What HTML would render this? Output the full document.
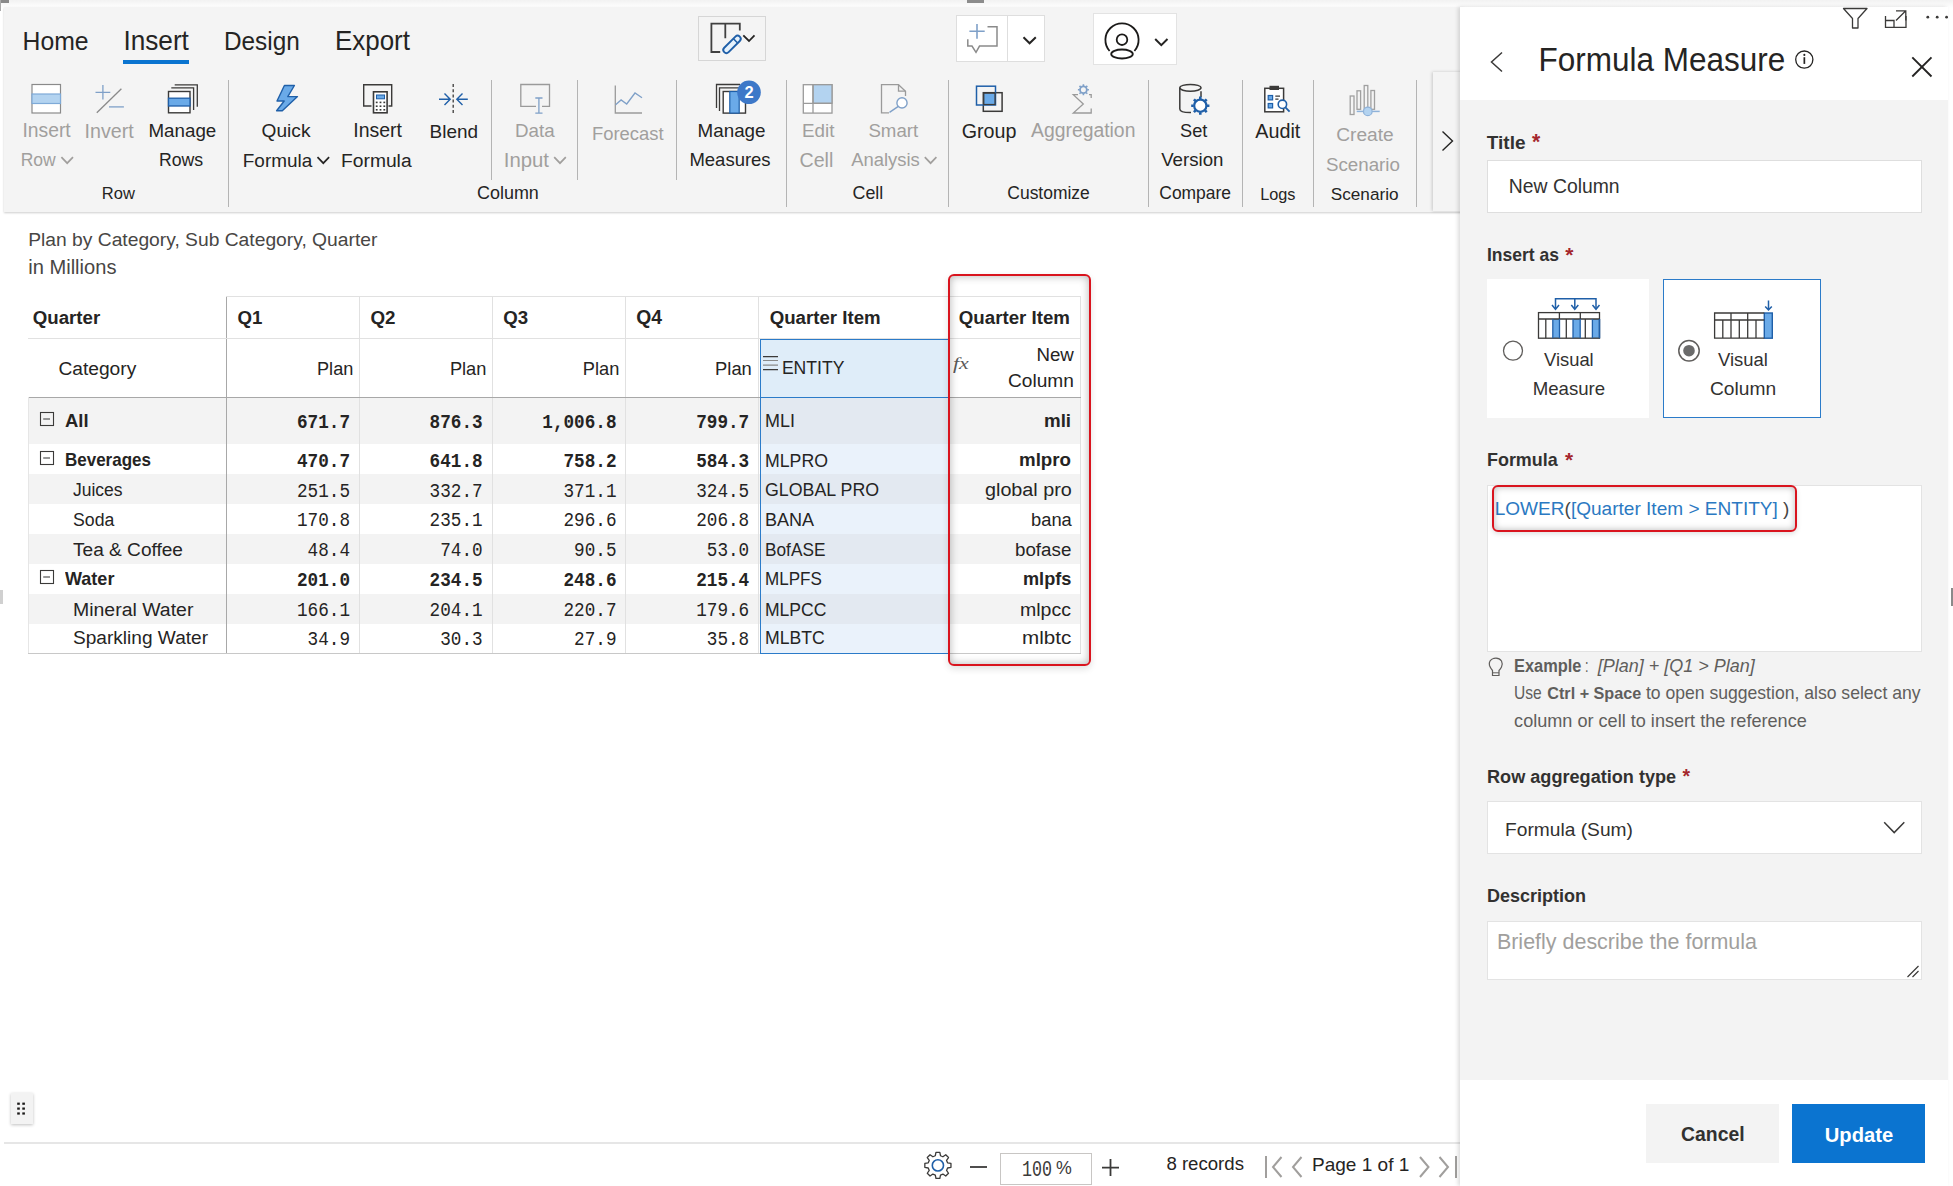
<!DOCTYPE html><html><head><meta charset="utf-8"><style>
html,body{margin:0;padding:0}
body{width:1953px;height:1186px;position:relative;overflow:hidden;background:#fff;font-family:"Liberation Sans",sans-serif;color:#252423}
.t{position:absolute;white-space:nowrap}
.b{position:absolute}
</style></head><body>
<div class="b" style="left:0px;top:0px;width:1953px;height:8px;background:linear-gradient(#f2f2f2,#fff)"></div>
<div class="b" style="left:0px;top:0px;width:9px;height:3px;background:#8a8a8a"></div>
<div class="b" style="left:0px;top:0px;width:1px;height:11px;background:#aaa"></div>
<div class="b" style="left:966.5px;top:0px;width:17.5px;height:3px;background:#8c8c8c"></div>
<div class="b" style="left:4px;top:7px;width:1460px;height:205px;background:#f4f4f4;box-shadow:0 1px 2px rgba(0,0,0,0.2)"></div>
<div class="t" style="left:22.60px;top:25.72px;width:1200px;text-align:left;font-size:24.76px;line-height:32px;font-weight:400;color:#252423;font-family:'Liberation Sans',sans-serif;font-style:normal;transform:scale(1.0000,1.07);transform-origin:0 24.58px;">Home</div>
<div class="t" style="left:123.40px;top:24.22px;width:1200px;text-align:left;font-size:26.2px;line-height:34px;font-weight:400;color:#252423;font-family:'Liberation Sans',sans-serif;font-style:normal;transform:scale(1.0000,1.07);transform-origin:0 26.08px;">Insert</div>
<div class="t" style="left:224.00px;top:25.87px;width:1200px;text-align:left;font-size:24.34px;line-height:32px;font-weight:400;color:#252423;font-family:'Liberation Sans',sans-serif;font-style:normal;transform:scale(1.0000,1.07);transform-origin:0 24.43px;">Design</div>
<div class="t" style="left:335.00px;top:24.31px;width:1200px;text-align:left;font-size:25.95px;line-height:34px;font-weight:400;color:#252423;font-family:'Liberation Sans',sans-serif;font-style:normal;transform:scale(1.0000,1.07);transform-origin:0 25.99px;">Export</div>
<div class="b" style="left:123px;top:60px;width:66px;height:4px;background:#0a74d0"></div>
<div class="b" style="left:698.4px;top:16.2px;width:68px;height:44.5px;border:1.5px solid #d6d6d6;box-sizing:border-box;background:#f4f4f4"></div>
<svg class="b" style="left:700px;top:18px;" width="64" height="42" viewBox="700 18 64 42"><path d="M720.2,52 H711.4 V23.6 H739.8 V30.5 M725.3,23.6 V38.2" fill="none" stroke="#404040" stroke-width="1.8"/>
<g transform="translate(732,44.4) rotate(-45)"><rect x="-11" y="-3.1" width="22" height="6.2" rx="3.1" fill="#e6f2fc" stroke="#1f5fa8" stroke-width="1.9"/><path d="M5,-3 V3" stroke="#1f5fa8" stroke-width="1.6"/></g>
<path d="M743.3,35.3 L749,41 L754.5,35.3" fill="none" stroke="#252423" stroke-width="1.8"/></svg>
<div class="b" style="left:956.4px;top:15.4px;width:89px;height:46.6px;border:1px solid #dedede;box-sizing:border-box;background:#fff"></div>
<div class="b" style="left:1007px;top:15.4px;width:1px;height:46.6px;background:#dedede"></div>
<svg class="b" style="left:960px;top:18px;" width="45" height="42" viewBox="960 18 45 42"><path d="M977,24 V38.7 M969.4,31.3 H984.7" stroke="#7fa0c8" stroke-width="1.6" fill="none"/>
<path d="M987.5,26.7 H997 V46.1 H979.5 L976,52.3 L972,46.1 H967.8 V39.3" fill="none" stroke="#8a8a8a" stroke-width="1.5"/></svg>
<svg class="b" style="left:1018px;top:30px;" width="22" height="20" viewBox="1018 30 22 20"><path d="M1023.5,37.2 L1029.6,43.3 L1035.8,37.2" fill="none" stroke="#252423" stroke-width="2"/></svg>
<div class="b" style="left:1092.5px;top:12.7px;width:84.6px;height:52.4px;border:1px solid #e3e3e3;box-sizing:border-box;background:#fff"></div>
<svg class="b" style="left:1100px;top:20px;" width="46" height="46" viewBox="1100 20 46 46"><path d="M1109.6,51 A16.6,16.6 0 1 1 1134.4,51" fill="none" stroke="#1b1a19" stroke-width="1.8"/>
<circle cx="1122" cy="39.7" r="5.3" fill="none" stroke="#1b1a19" stroke-width="1.8"/>
<ellipse cx="1122" cy="54" rx="10.8" ry="4.5" fill="none" stroke="#1b1a19" stroke-width="1.8"/></svg>
<svg class="b" style="left:1150px;top:34px;" width="24" height="16" viewBox="1150 34 24 16"><path d="M1155.2,39 L1161.3,45.2 L1167.5,39" fill="none" stroke="#252423" stroke-width="2"/></svg>
<div class="b" style="left:228px;top:80px;width:1px;height:127px;background:#b4b4b4"></div>
<div class="b" style="left:786px;top:80px;width:1px;height:127px;background:#b4b4b4"></div>
<div class="b" style="left:948px;top:80px;width:1px;height:127px;background:#b4b4b4"></div>
<div class="b" style="left:1148px;top:80px;width:1px;height:127px;background:#b4b4b4"></div>
<div class="b" style="left:1242px;top:80px;width:1px;height:127px;background:#b4b4b4"></div>
<div class="b" style="left:1313px;top:80px;width:1px;height:127px;background:#b4b4b4"></div>
<div class="b" style="left:1416px;top:80px;width:1px;height:127px;background:#b4b4b4"></div>
<div class="b" style="left:491px;top:80px;width:1px;height:100px;background:#b4b4b4"></div>
<div class="b" style="left:577px;top:80px;width:1px;height:100px;background:#b4b4b4"></div>
<div class="b" style="left:676px;top:80px;width:1px;height:100px;background:#b4b4b4"></div>
<div class="t" style="left:22.40px;top:118.41px;width:1200px;text-align:left;font-size:19.32px;line-height:25px;font-weight:400;color:#a19f9d;font-family:'Liberation Sans',sans-serif;font-style:normal;">Insert</div>
<div class="t" style="left:20.70px;top:149.12px;width:1200px;text-align:left;font-size:17.56px;line-height:23px;font-weight:400;color:#a19f9d;font-family:'Liberation Sans',sans-serif;font-style:normal;">Row</div>
<svg class="b" style="left:58px;top:152px;" width="20" height="14" viewBox="58 152 20 14"><path d="M61.400000000000006,157.2 L67.2,163.2 L73.0,157.2" fill="none" stroke="#a19f9d" stroke-width="1.7"/></svg>
<div class="t" style="left:84.60px;top:117.78px;width:1200px;text-align:left;font-size:19.68px;line-height:26px;font-weight:400;color:#a19f9d;font-family:'Liberation Sans',sans-serif;font-style:normal;">Invert</div>
<div class="t" style="left:148.50px;top:119.10px;width:1200px;text-align:left;font-size:18.75px;line-height:24px;font-weight:400;color:#252423;font-family:'Liberation Sans',sans-serif;font-style:normal;">Manage</div>
<div class="t" style="left:158.90px;top:149.07px;width:1200px;text-align:left;font-size:17.68px;line-height:23px;font-weight:400;color:#252423;font-family:'Liberation Sans',sans-serif;font-style:normal;">Rows</div>
<div class="t" style="left:101.80px;top:183.48px;width:1200px;text-align:left;font-size:16.52px;line-height:21px;font-weight:400;color:#252423;font-family:'Liberation Sans',sans-serif;font-style:normal;">Row</div>
<div class="t" style="left:261.60px;top:118.47px;width:1200px;text-align:left;font-size:19.14px;line-height:25px;font-weight:400;color:#252423;font-family:'Liberation Sans',sans-serif;font-style:normal;">Quick</div>
<div class="t" style="left:242.80px;top:147.63px;width:1200px;text-align:left;font-size:18.96px;line-height:25px;font-weight:400;color:#252423;font-family:'Liberation Sans',sans-serif;font-style:normal;">Formula</div>
<svg class="b" style="left:312px;top:152px;" width="22" height="14" viewBox="312 152 22 14"><path d="M317.5,157.2 L323.3,163.2 L329.1,157.2" fill="none" stroke="#252423" stroke-width="1.7"/></svg>
<div class="t" style="left:353.30px;top:118.35px;width:1200px;text-align:left;font-size:19.48px;line-height:25px;font-weight:400;color:#252423;font-family:'Liberation Sans',sans-serif;font-style:normal;">Insert</div>
<div class="t" style="left:341.00px;top:147.53px;width:1200px;text-align:left;font-size:19.26px;line-height:25px;font-weight:400;color:#252423;font-family:'Liberation Sans',sans-serif;font-style:normal;">Formula</div>
<div class="t" style="left:429.60px;top:118.52px;width:1200px;text-align:left;font-size:18.98px;line-height:25px;font-weight:400;color:#252423;font-family:'Liberation Sans',sans-serif;font-style:normal;">Blend</div>
<div class="t" style="left:477.00px;top:181.98px;width:1200px;text-align:left;font-size:17.94px;line-height:23px;font-weight:400;color:#252423;font-family:'Liberation Sans',sans-serif;font-style:normal;">Column</div>
<div class="t" style="left:515.00px;top:119.10px;width:1200px;text-align:left;font-size:18.77px;line-height:24px;font-weight:400;color:#a19f9d;font-family:'Liberation Sans',sans-serif;font-style:normal;">Data</div>
<div class="t" style="left:503.80px;top:146.66px;width:1200px;text-align:left;font-size:20.31px;line-height:26px;font-weight:400;color:#a19f9d;font-family:'Liberation Sans',sans-serif;font-style:normal;">Input</div>
<svg class="b" style="left:550px;top:152px;" width="20" height="14" viewBox="550 152 20 14"><path d="M554.2,157.2 L560,163.2 L565.8,157.2" fill="none" stroke="#a19f9d" stroke-width="1.7"/></svg>
<div class="t" style="left:591.90px;top:122.41px;width:1200px;text-align:left;font-size:18.43px;line-height:24px;font-weight:400;color:#a19f9d;font-family:'Liberation Sans',sans-serif;font-style:normal;">Forecast</div>
<div class="t" style="left:697.60px;top:119.08px;width:1200px;text-align:left;font-size:18.81px;line-height:24px;font-weight:400;color:#252423;font-family:'Liberation Sans',sans-serif;font-style:normal;">Manage</div>
<div class="t" style="left:689.40px;top:148.29px;width:1200px;text-align:left;font-size:18.5px;line-height:24px;font-weight:400;color:#252423;font-family:'Liberation Sans',sans-serif;font-style:normal;">Measures</div>
<div class="t" style="left:802.00px;top:119.07px;width:1200px;text-align:left;font-size:18.84px;line-height:24px;font-weight:400;color:#a19f9d;font-family:'Liberation Sans',sans-serif;font-style:normal;">Edit</div>
<div class="t" style="left:799.50px;top:146.89px;width:1200px;text-align:left;font-size:19.65px;line-height:26px;font-weight:400;color:#a19f9d;font-family:'Liberation Sans',sans-serif;font-style:normal;">Cell</div>
<div class="t" style="left:868.40px;top:119.12px;width:1200px;text-align:left;font-size:18.69px;line-height:24px;font-weight:400;color:#a19f9d;font-family:'Liberation Sans',sans-serif;font-style:normal;">Smart</div>
<div class="t" style="left:851.20px;top:148.31px;width:1200px;text-align:left;font-size:18.44px;line-height:24px;font-weight:400;color:#a19f9d;font-family:'Liberation Sans',sans-serif;font-style:normal;">Analysis</div>
<svg class="b" style="left:920px;top:152px;" width="22" height="14" viewBox="920 152 22 14"><path d="M924.8000000000001,157.2 L930.6,163.2 L936.4,157.2" fill="none" stroke="#a19f9d" stroke-width="1.7"/></svg>
<div class="t" style="left:852.50px;top:182.01px;width:1200px;text-align:left;font-size:17.85px;line-height:23px;font-weight:400;color:#252423;font-family:'Liberation Sans',sans-serif;font-style:normal;">Cell</div>
<div class="t" style="left:961.70px;top:117.77px;width:1200px;text-align:left;font-size:19.71px;line-height:26px;font-weight:400;color:#252423;font-family:'Liberation Sans',sans-serif;font-style:normal;">Group</div>
<div class="t" style="left:1031.00px;top:118.39px;width:1200px;text-align:left;font-size:19.37px;line-height:25px;font-weight:400;color:#a19f9d;font-family:'Liberation Sans',sans-serif;font-style:normal;">Aggregation</div>
<div class="t" style="left:1007.30px;top:182.14px;width:1200px;text-align:left;font-size:17.48px;line-height:23px;font-weight:400;color:#252423;font-family:'Liberation Sans',sans-serif;font-style:normal;">Customize</div>
<div class="t" style="left:1180.00px;top:119.29px;width:1200px;text-align:left;font-size:18.2px;line-height:24px;font-weight:400;color:#252423;font-family:'Liberation Sans',sans-serif;font-style:normal;">Set</div>
<div class="t" style="left:1161.20px;top:148.23px;width:1200px;text-align:left;font-size:18.68px;line-height:24px;font-weight:400;color:#252423;font-family:'Liberation Sans',sans-serif;font-style:normal;">Version</div>
<div class="t" style="left:1159.30px;top:182.15px;width:1200px;text-align:left;font-size:17.45px;line-height:23px;font-weight:400;color:#252423;font-family:'Liberation Sans',sans-serif;font-style:normal;">Compare</div>
<div class="t" style="left:1255.30px;top:117.75px;width:1200px;text-align:left;font-size:19.78px;line-height:26px;font-weight:400;color:#252423;font-family:'Liberation Sans',sans-serif;font-style:normal;">Audit</div>
<div class="t" style="left:1260.20px;top:183.56px;width:1200px;text-align:left;font-size:16.27px;line-height:21px;font-weight:400;color:#252423;font-family:'Liberation Sans',sans-serif;font-style:normal;">Logs</div>
<div class="t" style="left:1336.20px;top:121.86px;width:1200px;text-align:left;font-size:19.17px;line-height:25px;font-weight:400;color:#a19f9d;font-family:'Liberation Sans',sans-serif;font-style:normal;">Create</div>
<div class="t" style="left:1325.90px;top:152.50px;width:1200px;text-align:left;font-size:18.76px;line-height:24px;font-weight:400;color:#a19f9d;font-family:'Liberation Sans',sans-serif;font-style:normal;">Scenario</div>
<div class="t" style="left:1330.80px;top:182.75px;width:1200px;text-align:left;font-size:17.16px;line-height:22px;font-weight:400;color:#252423;font-family:'Liberation Sans',sans-serif;font-style:normal;">Scenario</div>
<div class="b" style="left:1433px;top:72px;width:30px;height:139px;background:#f4f4f4;box-shadow:-1px 0 3px rgba(0,0,0,0.18)"></div>
<svg class="b" style="left:1436px;top:128px;" width="20" height="26" viewBox="1436 128 20 26"><path d="M1442.5,131.5 L1452.5,141 L1442.5,150.5" fill="none" stroke="#252423" stroke-width="1.4"/></svg>
<svg class="b" style="left:20px;top:75px;" width="1440" height="45" viewBox="20 75 1440 45">
<!-- Insert Row -->
<rect x="32" y="84.5" width="28.5" height="28.5" fill="#fff" stroke="#8a8a8a" stroke-width="1.2"/>
<rect x="32" y="94" width="28.5" height="9.5" fill="#b3d3f0" stroke="#7eaad8" stroke-width="1.2"/>
<!-- Invert -->
<path d="M95.5,92.3 H110.3 M102.9,85 V99.6" stroke="#7fa0c8" stroke-width="1.3" fill="none"/>
<path d="M96.8,112.8 L121.4,88.7" stroke="#8a8a8a" stroke-width="1.3" fill="none"/>
<path d="M109,106.9 H123.9" stroke="#7fa0c8" stroke-width="1.3" fill="none"/>
<!-- Manage Rows -->
<path d="M174.7,84.8 H197.3 V106.7" stroke="#3b3a39" stroke-width="1.3" fill="none"/>
<path d="M171.3,87.9 H193.6 V110" stroke="#3b3a39" stroke-width="1.3" fill="none"/>
<rect x="168.5" y="91.5" width="21.5" height="21.3" fill="#fff" stroke="#3b3a39" stroke-width="1.4"/>
<rect x="168.5" y="98.2" width="21.5" height="7.8" fill="#6aaae8" stroke="#1f5fa8" stroke-width="1.3"/>
<!-- Quick Formula -->
<path d="M284.4,85.5 L294.4,85.5 L287.8,96.6 L297.5,96.6 L282.3,110.8 L276.6,110.8 L284.2,101 L277,101 Z" fill="#6aaae8" stroke="#1f5fa8" stroke-width="1.4" stroke-linejoin="round"/>
<!-- Insert Formula -->
<path d="M371.5,106 H363.7 V84.8 H391.7 V106 H388.5" stroke="#3b3a39" stroke-width="1.4" fill="none"/>
<rect x="373.5" y="91.8" width="13.6" height="21" fill="#fff" stroke="#3b3a39" stroke-width="1.6"/>
<rect x="376.5" y="95" width="8" height="3.8" fill="#6aaae8" stroke="#1f5fa8" stroke-width="1"/>
<g fill="#3b3a39"><rect x="375.8" y="101.6" width="1.8" height="1.6"/><rect x="379.6" y="101.6" width="1.8" height="1.6"/><rect x="383.4" y="101.6" width="1.8" height="1.6"/>
<rect x="375.8" y="105.4" width="1.8" height="1.6"/><rect x="379.6" y="105.4" width="1.8" height="1.6"/><rect x="383.4" y="105.4" width="1.8" height="1.6"/>
<rect x="375.8" y="109" width="1.8" height="1.6"/><rect x="379.6" y="109" width="1.8" height="1.6"/><rect x="383.4" y="109" width="1.8" height="1.6"/></g>
<!-- Blend -->
<path d="M453.2,84 V114" stroke="#3b3a39" stroke-width="1.3" stroke-dasharray="3,2.2" fill="none"/>
<path d="M439,99.2 H450 M444.5,93.5 L450.2,99.2 L444.5,105" stroke="#1f5fa8" stroke-width="1.4" fill="none"/>
<path d="M467.8,99.2 H457 M462.5,93.5 L456.8,99.2 L462.5,105" stroke="#1f5fa8" stroke-width="1.4" fill="none"/>
<!-- Data Input -->
<path d="M536,106.4 H520.8 V84.5 H549.5 V106.4 H542" stroke="#9a9a9a" stroke-width="1.3" fill="none"/>
<path d="M538.9,98 V113.2 M535.3,98 H542.5 M535.3,113.2 H542.5" stroke="#7fa0c8" stroke-width="1.3" fill="none"/>
<!-- Forecast -->
<path d="M615.3,85.4 V113 H642" stroke="#9a9a9a" stroke-width="1.3" fill="none"/>
<path d="M615.6,104.7 L621.1,99.9 L626.7,104 L635,93 L642,97.8" stroke="#7fa0c8" stroke-width="1.3" fill="none"/>
<!-- Manage Measures -->
<path d="M716.5,108 V84.5 H740" stroke="#3b3a39" stroke-width="1.3" fill="none"/>
<path d="M719.5,111 V87.8 H742" stroke="#3b3a39" stroke-width="1.3" fill="none"/>
<rect x="723.2" y="91.5" width="22.3" height="21.6" fill="#fff" stroke="#3b3a39" stroke-width="1.4"/>
<rect x="729.8" y="91.5" width="9.4" height="21.6" fill="#6aaae8" stroke="#1f5fa8" stroke-width="1.2"/>
<circle cx="749" cy="92.3" r="11.8" fill="#3d78c8"/>
<text x="749" y="98.3" text-anchor="middle" font-family="Liberation Sans" font-weight="700" font-size="16.5" fill="#fff">2</text>
<!-- Edit Cell -->
<rect x="803.3" y="84.7" width="28.7" height="28.4" fill="#fff" stroke="#9a9a9a" stroke-width="1.3"/>
<rect x="813" y="84.7" width="19" height="18.6" fill="#b3d3f0" stroke="#9a9a9a" stroke-width="1.3"/>
<path d="M803.3,103.3 H832 M813,84.7 V113.1" stroke="#9a9a9a" stroke-width="1.3" fill="none"/>
<!-- Smart Analysis -->
<path d="M889,112.8 H881.5 V84.7 H898.5 L905.5,91.2 V96" stroke="#9a9a9a" stroke-width="1.3" fill="none"/>
<path d="M898.5,84.7 V91.2 H905.5" stroke="#9a9a9a" stroke-width="1.3" fill="none"/>
<circle cx="902" cy="102.9" r="5.1" fill="#fff" stroke="#7fa0c8" stroke-width="1.4"/>
<path d="M889.5,112.3 L898.3,106.4" stroke="#7fa0c8" stroke-width="1.4" fill="none"/>
<!-- Group -->
<rect x="983.3" y="92.7" width="18.8" height="18.6" fill="none" stroke="#3b3a39" stroke-width="1.5"/>
<rect x="976.5" y="86.2" width="19" height="18.8" fill="none" stroke="#1f5fa8" stroke-width="1.5"/>
<rect x="983.8" y="93.2" width="11.2" height="11.3" fill="#6aaae8" stroke="#3b3a39" stroke-width="1.2"/>
<!-- Aggregation -->
<path d="M1078,94.7 H1073.3 L1083.3,104 L1073.3,113 H1091.2 V108.5 M1091.2,98 V94.7 H1089" stroke="#9a9a9a" stroke-width="1.3" fill="none" stroke-linejoin="miter"/>
<circle cx="1083.4" cy="89.8" r="3.4" fill="none" stroke="#7fa0c8" stroke-width="1.8"/>
<path d="M1083.4,84.3 V86 M1083.4,93.6 V95.3 M1077.9,89.8 H1079.6 M1087.2,89.8 H1088.9 M1079.5,85.9 L1080.7,87.1 M1086.1,92.5 L1087.3,93.7 M1079.5,93.7 L1080.7,92.5 M1086.1,87.1 L1087.3,85.9" stroke="#7fa0c8" stroke-width="1.6"/>
<!-- Set Version -->
<path d="M1201,97 V91.2 M1179.8,87.8 V109" stroke="#3b3a39" stroke-width="1.5" fill="none"/>
<ellipse cx="1190.4" cy="87.8" rx="10.6" ry="3.4" fill="none" stroke="#3b3a39" stroke-width="1.5"/>
<path d="M1179.8,109 Q1180,112.6 1190,112.6 L1191,112.6" stroke="#3b3a39" stroke-width="1.5" fill="none"/>
<circle cx="1200.3" cy="105.7" r="6.1" fill="#fff" stroke="#1f5fa8" stroke-width="2.2"/>
<g stroke="#1f5fa8" stroke-width="2.6"><path d="M1200.3,96.6 V99 M1200.3,112.4 V114.8 M1191.2,105.7 H1193.6 M1207,105.7 H1209.4 M1193.9,99.3 L1195.6,101 M1205,110.4 L1206.7,112.1 M1193.9,112.1 L1195.6,110.4 M1205,101 L1206.7,99.3"/></g>
<!-- Audit -->
<rect x="1264.8" y="88.3" width="18.8" height="23.5" fill="#fff" stroke="#3b3a39" stroke-width="1.5"/>
<rect x="1269.5" y="85.8" width="9.5" height="4.2" fill="#3b3a39"/>
<rect x="1268.2" y="95.5" width="4.4" height="4.4" fill="#6aaae8" stroke="#1f5fa8" stroke-width="1.2"/>
<rect x="1268.2" y="103.5" width="4.4" height="4.4" fill="#6aaae8" stroke="#1f5fa8" stroke-width="1.2"/>
<path d="M1275.3,96.2 H1280 M1275.3,99.2 H1278.5" stroke="#3b3a39" stroke-width="1.2"/>
<circle cx="1282.4" cy="104.3" r="4.2" fill="#fff" stroke="#1f5fa8" stroke-width="1.6"/>
<path d="M1285.4,107.4 L1289.6,111.6" stroke="#1f5fa8" stroke-width="1.8"/>
<!-- Create Scenario -->
<g fill="none" stroke="#a0a0a0" stroke-width="1.3">
<rect x="1350.2" y="96" width="3.8" height="18.5"/><rect x="1357" y="90.8" width="3.6" height="18.5"/>
<rect x="1364.2" y="85.5" width="3.6" height="23.8"/><rect x="1370.9" y="90.5" width="3.6" height="18.8"/></g>
<path d="M1356.7,111.4 H1379.7" stroke="#8fb2d9" stroke-width="1.5"/>
<circle cx="1367.8" cy="111.4" r="4.3" fill="#b3d3f0" stroke="#8fb2d9" stroke-width="1.2"/>
</svg>
<div class="t" style="left:28.20px;top:226.93px;width:1200px;text-align:left;font-size:19.26px;line-height:25px;font-weight:400;color:#484644;font-family:'Liberation Sans',sans-serif;font-style:normal;">Plan by Category, Sub Category, Quarter</div>
<div class="t" style="left:28.20px;top:253.83px;width:1200px;text-align:left;font-size:20.11px;line-height:26px;font-weight:400;color:#484644;font-family:'Liberation Sans',sans-serif;font-style:normal;">in Millions</div>
<div class="b" style="left:27.5px;top:397.5px;width:1053.1px;height:46.5px;background:#f3f3f3"></div>
<div class="b" style="left:759.5px;top:397.5px;width:188.29999999999995px;height:46.5px;background:#e3e9f1"></div>
<div class="b" style="left:27.5px;top:444.0px;width:1053.1px;height:30.0px;background:#ffffff"></div>
<div class="b" style="left:759.5px;top:444.0px;width:188.29999999999995px;height:30.0px;background:#eaf2fb"></div>
<div class="b" style="left:27.5px;top:474px;width:1053.1px;height:30px;background:#f3f3f3"></div>
<div class="b" style="left:759.5px;top:474px;width:188.29999999999995px;height:30px;background:#e3e9f1"></div>
<div class="b" style="left:27.5px;top:504px;width:1053.1px;height:30px;background:#ffffff"></div>
<div class="b" style="left:759.5px;top:504px;width:188.29999999999995px;height:30px;background:#eaf2fb"></div>
<div class="b" style="left:27.5px;top:534px;width:1053.1px;height:30px;background:#f3f3f3"></div>
<div class="b" style="left:759.5px;top:534px;width:188.29999999999995px;height:30px;background:#e3e9f1"></div>
<div class="b" style="left:27.5px;top:564px;width:1053.1px;height:30px;background:#ffffff"></div>
<div class="b" style="left:759.5px;top:564px;width:188.29999999999995px;height:30px;background:#eaf2fb"></div>
<div class="b" style="left:27.5px;top:594px;width:1053.1px;height:29.5px;background:#f3f3f3"></div>
<div class="b" style="left:759.5px;top:594px;width:188.29999999999995px;height:29.5px;background:#e3e9f1"></div>
<div class="b" style="left:27.5px;top:623.5px;width:1053.1px;height:29.799999999999955px;background:#ffffff"></div>
<div class="b" style="left:759.5px;top:623.5px;width:188.29999999999995px;height:29.799999999999955px;background:#eaf2fb"></div>
<div class="b" style="left:759.5px;top:338.5px;width:188.29999999999995px;height:59.0px;background:#dfedf9"></div>
<div class="b" style="left:226px;top:296px;width:1px;height:357.29999999999995px;background:#a8a8a8"></div>
<div class="b" style="left:359px;top:296px;width:1px;height:357.29999999999995px;background:#e1e1e1"></div>
<div class="b" style="left:492px;top:296px;width:1px;height:357.29999999999995px;background:#e1e1e1"></div>
<div class="b" style="left:625px;top:296px;width:1px;height:357.29999999999995px;background:#e1e1e1"></div>
<div class="b" style="left:758px;top:296px;width:1px;height:357.29999999999995px;background:#e1e1e1"></div>
<div class="b" style="left:1080px;top:296px;width:1px;height:357.29999999999995px;background:#e1e1e1"></div>
<div class="b" style="left:226px;top:296px;width:854.5999999999999px;height:1px;background:#e1e1e1"></div>
<div class="b" style="left:27.5px;top:338px;width:1053.1px;height:1px;background:#e1e1e1"></div>
<div class="b" style="left:27.5px;top:397px;width:1053.1px;height:1px;background:#a8a8a8"></div>
<div class="b" style="left:27.5px;top:653px;width:1053.1px;height:1px;background:#c8c8c8"></div>
<div class="b" style="left:28px;top:397px;width:1px;height:256.29999999999995px;background:#e6e6e6"></div>
<div class="b" style="left:759.5px;top:338.5px;width:189.5px;height:315.0px;border:1px solid #2b7bc9;box-sizing:border-box"></div>
<div class="b" style="left:759.5px;top:397px;width:188.29999999999995px;height:1px;background:#2b7bc9"></div>
<div class="t" style="left:32.80px;top:305.63px;width:1200px;text-align:left;font-size:18.67px;line-height:24px;font-weight:700;color:#252423;font-family:'Liberation Sans',sans-serif;font-style:normal;">Quarter</div>
<div class="t" style="left:237.60px;top:305.64px;width:1200px;text-align:left;font-size:18.65px;line-height:24px;font-weight:700;color:#252423;font-family:'Liberation Sans',sans-serif;font-style:normal;">Q1</div>
<div class="t" style="left:370.50px;top:305.59px;width:1200px;text-align:left;font-size:18.8px;line-height:24px;font-weight:700;color:#252423;font-family:'Liberation Sans',sans-serif;font-style:normal;">Q2</div>
<div class="t" style="left:503.30px;top:305.64px;width:1200px;text-align:left;font-size:18.65px;line-height:24px;font-weight:700;color:#252423;font-family:'Liberation Sans',sans-serif;font-style:normal;">Q3</div>
<div class="t" style="left:636.20px;top:304.90px;width:1200px;text-align:left;font-size:19.33px;line-height:25px;font-weight:700;color:#252423;font-family:'Liberation Sans',sans-serif;font-style:normal;">Q4</div>
<div class="t" style="left:769.70px;top:305.63px;width:1200px;text-align:left;font-size:18.67px;line-height:24px;font-weight:700;color:#252423;font-family:'Liberation Sans',sans-serif;font-style:normal;">Quarter Item</div>
<div class="t" style="left:958.80px;top:305.62px;width:1200px;text-align:left;font-size:18.69px;line-height:24px;font-weight:700;color:#252423;font-family:'Liberation Sans',sans-serif;font-style:normal;">Quarter Item</div>
<div class="t" style="left:58.40px;top:355.55px;width:1200px;text-align:left;font-size:19.19px;line-height:25px;font-weight:400;color:#252423;font-family:'Liberation Sans',sans-serif;font-style:normal;">Category</div>
<div class="t" style="left:317.00px;top:356.71px;width:1200px;text-align:left;font-size:18.15px;line-height:24px;font-weight:400;color:#252423;font-family:'Liberation Sans',sans-serif;font-style:normal;">Plan</div>
<div class="t" style="left:449.90px;top:356.68px;width:1200px;text-align:left;font-size:18.25px;line-height:24px;font-weight:400;color:#252423;font-family:'Liberation Sans',sans-serif;font-style:normal;">Plan</div>
<div class="t" style="left:582.80px;top:356.68px;width:1200px;text-align:left;font-size:18.25px;line-height:24px;font-weight:400;color:#252423;font-family:'Liberation Sans',sans-serif;font-style:normal;">Plan</div>
<div class="t" style="left:715.10px;top:356.64px;width:1200px;text-align:left;font-size:18.35px;line-height:24px;font-weight:400;color:#252423;font-family:'Liberation Sans',sans-serif;font-style:normal;">Plan</div>
<div class="t" style="left:781.90px;top:357.21px;width:1200px;text-align:left;font-size:17.58px;line-height:23px;font-weight:400;color:#252423;font-family:'Liberation Sans',sans-serif;font-style:normal;">ENTITY</div>
<div class="t" style="left:1036.40px;top:342.92px;width:1200px;text-align:left;font-size:18.71px;line-height:24px;font-weight:400;color:#252423;font-family:'Liberation Sans',sans-serif;font-style:normal;">New</div>
<div class="t" style="left:1008.00px;top:368.27px;width:1200px;text-align:left;font-size:19.13px;line-height:25px;font-weight:400;color:#252423;font-family:'Liberation Sans',sans-serif;font-style:normal;">Column</div>
<svg class="b" style="left:760px;top:352px;" width="22" height="22" viewBox="760 352 22 22"><path d="M763,356.6 H778 M763,369.6 H778" stroke="#3b3a39" stroke-width="1.2"/><path d="M763,360.5 H778 M763,365.2 H778" stroke="#8a8a8a" stroke-width="1.2"/></svg>
<div class="t" style="left:953.00px;top:352.63px;width:1200px;text-align:left;font-size:17px;line-height:22px;font-weight:400;color:#5a5958;font-family:'Liberation Serif',sans-serif;font-style:italic;transform:scale(1.2908,1.0);transform-origin:0 16.87px;">fx</div>
<svg class="b" style="left:39px;top:410.90000000000003px;" width="16" height="17" viewBox="39 410.90000000000003 16 17"><rect x="40.5" y="412.40000000000003" width="13" height="13" fill="none" stroke="#3b3a39" stroke-width="1.1"/><path d="M43.2,418.90000000000003 H50" stroke="#6b6b6b" stroke-width="1.4"/></svg>
<div class="t" style="left:64.50px;top:408.99px;width:1200px;text-align:left;font-size:18.2px;line-height:24px;font-weight:700;color:#252423;font-family:'Liberation Sans',sans-serif;font-style:normal;transform:scale(1.0130,1.0);transform-origin:0 18.31px;">All</div>
<div class="t" style="left:297.02px;top:411.59px;width:1200px;text-align:left;font-size:17.66px;line-height:23px;font-weight:700;color:#252423;font-family:'Liberation Mono',sans-serif;font-style:normal;transform:scaleY(1.14);transform-origin:0 16.21px;">671.7</div>
<div class="t" style="left:429.62px;top:411.59px;width:1200px;text-align:left;font-size:17.66px;line-height:23px;font-weight:700;color:#252423;font-family:'Liberation Mono',sans-serif;font-style:normal;transform:scaleY(1.14);transform-origin:0 16.21px;">876.3</div>
<div class="t" style="left:542.33px;top:411.59px;width:1200px;text-align:left;font-size:17.66px;line-height:23px;font-weight:700;color:#252423;font-family:'Liberation Mono',sans-serif;font-style:normal;transform:scaleY(1.14);transform-origin:0 16.21px;">1,006.8</div>
<div class="t" style="left:696.22px;top:411.59px;width:1200px;text-align:left;font-size:17.66px;line-height:23px;font-weight:700;color:#252423;font-family:'Liberation Mono',sans-serif;font-style:normal;transform:scaleY(1.14);transform-origin:0 16.21px;">799.7</div>
<div class="t" style="left:765.00px;top:408.15px;width:1200px;text-align:left;font-size:19.2px;line-height:25px;font-weight:400;color:#252423;font-family:'Liberation Sans',sans-serif;font-style:normal;transform:scale(0.9356,1.0);transform-origin:0 19.15px;">MLI</div>
<div class="t" style="left:1044.40px;top:408.86px;width:1200px;text-align:left;font-size:18.6px;line-height:24px;font-weight:700;color:#252423;font-family:'Liberation Sans',sans-serif;font-style:normal;transform:scale(1.0081,1.0);transform-origin:0 18.44px;">mli</div>
<svg class="b" style="left:39px;top:450.40000000000003px;" width="16" height="17" viewBox="39 450.40000000000003 16 17"><rect x="40.5" y="451.90000000000003" width="13" height="13" fill="none" stroke="#3b3a39" stroke-width="1.1"/><path d="M43.2,458.40000000000003 H50" stroke="#6b6b6b" stroke-width="1.4"/></svg>
<div class="t" style="left:64.80px;top:448.49px;width:1200px;text-align:left;font-size:18.2px;line-height:24px;font-weight:700;color:#252423;font-family:'Liberation Sans',sans-serif;font-style:normal;transform:scale(0.9338,1.0);transform-origin:0 18.31px;">Beverages</div>
<div class="t" style="left:297.02px;top:451.09px;width:1200px;text-align:left;font-size:17.66px;line-height:23px;font-weight:700;color:#252423;font-family:'Liberation Mono',sans-serif;font-style:normal;transform:scaleY(1.14);transform-origin:0 16.21px;">470.7</div>
<div class="t" style="left:429.62px;top:451.09px;width:1200px;text-align:left;font-size:17.66px;line-height:23px;font-weight:700;color:#252423;font-family:'Liberation Mono',sans-serif;font-style:normal;transform:scaleY(1.14);transform-origin:0 16.21px;">641.8</div>
<div class="t" style="left:563.52px;top:451.09px;width:1200px;text-align:left;font-size:17.66px;line-height:23px;font-weight:700;color:#252423;font-family:'Liberation Mono',sans-serif;font-style:normal;transform:scaleY(1.14);transform-origin:0 16.21px;">758.2</div>
<div class="t" style="left:696.22px;top:451.09px;width:1200px;text-align:left;font-size:17.66px;line-height:23px;font-weight:700;color:#252423;font-family:'Liberation Mono',sans-serif;font-style:normal;transform:scaleY(1.14);transform-origin:0 16.21px;">584.3</div>
<div class="t" style="left:765.00px;top:447.65px;width:1200px;text-align:left;font-size:19.2px;line-height:25px;font-weight:400;color:#252423;font-family:'Liberation Sans',sans-serif;font-style:normal;transform:scale(0.9232,1.0);transform-origin:0 19.15px;">MLPRO</div>
<div class="t" style="left:1019.40px;top:448.36px;width:1200px;text-align:left;font-size:18.6px;line-height:24px;font-weight:700;color:#252423;font-family:'Liberation Sans',sans-serif;font-style:normal;transform:scale(1.0056,1.0);transform-origin:0 18.44px;">mlpro</div>
<div class="t" style="left:72.50px;top:477.25px;width:1200px;text-align:left;font-size:19.2px;line-height:25px;font-weight:400;color:#252423;font-family:'Liberation Sans',sans-serif;font-style:normal;transform:scale(0.9110,1.0);transform-origin:0 19.15px;">Juices</div>
<div class="t" style="left:297.02px;top:480.69px;width:1200px;text-align:left;font-size:17.66px;line-height:23px;font-weight:400;color:#252423;font-family:'Liberation Mono',sans-serif;font-style:normal;transform:scaleY(1.14);transform-origin:0 16.21px;">251.5</div>
<div class="t" style="left:429.62px;top:480.69px;width:1200px;text-align:left;font-size:17.66px;line-height:23px;font-weight:400;color:#252423;font-family:'Liberation Mono',sans-serif;font-style:normal;transform:scaleY(1.14);transform-origin:0 16.21px;">332.7</div>
<div class="t" style="left:563.52px;top:480.69px;width:1200px;text-align:left;font-size:17.66px;line-height:23px;font-weight:400;color:#252423;font-family:'Liberation Mono',sans-serif;font-style:normal;transform:scaleY(1.14);transform-origin:0 16.21px;">371.1</div>
<div class="t" style="left:696.22px;top:480.69px;width:1200px;text-align:left;font-size:17.66px;line-height:23px;font-weight:400;color:#252423;font-family:'Liberation Mono',sans-serif;font-style:normal;transform:scaleY(1.14);transform-origin:0 16.21px;">324.5</div>
<div class="t" style="left:765.00px;top:477.25px;width:1200px;text-align:left;font-size:19.2px;line-height:25px;font-weight:400;color:#252423;font-family:'Liberation Sans',sans-serif;font-style:normal;transform:scale(0.9279,1.0);transform-origin:0 19.15px;">GLOBAL PRO</div>
<div class="t" style="left:984.60px;top:477.25px;width:1200px;text-align:left;font-size:19.2px;line-height:25px;font-weight:400;color:#252423;font-family:'Liberation Sans',sans-serif;font-style:normal;transform:scale(1.0298,1.0);transform-origin:0 19.15px;">global pro</div>
<div class="t" style="left:72.50px;top:506.85px;width:1200px;text-align:left;font-size:19.2px;line-height:25px;font-weight:400;color:#252423;font-family:'Liberation Sans',sans-serif;font-style:normal;transform:scale(0.9215,1.0);transform-origin:0 19.15px;">Soda</div>
<div class="t" style="left:297.02px;top:510.29px;width:1200px;text-align:left;font-size:17.66px;line-height:23px;font-weight:400;color:#252423;font-family:'Liberation Mono',sans-serif;font-style:normal;transform:scaleY(1.14);transform-origin:0 16.21px;">170.8</div>
<div class="t" style="left:429.62px;top:510.29px;width:1200px;text-align:left;font-size:17.66px;line-height:23px;font-weight:400;color:#252423;font-family:'Liberation Mono',sans-serif;font-style:normal;transform:scaleY(1.14);transform-origin:0 16.21px;">235.1</div>
<div class="t" style="left:563.52px;top:510.29px;width:1200px;text-align:left;font-size:17.66px;line-height:23px;font-weight:400;color:#252423;font-family:'Liberation Mono',sans-serif;font-style:normal;transform:scaleY(1.14);transform-origin:0 16.21px;">296.6</div>
<div class="t" style="left:696.22px;top:510.29px;width:1200px;text-align:left;font-size:17.66px;line-height:23px;font-weight:400;color:#252423;font-family:'Liberation Mono',sans-serif;font-style:normal;transform:scaleY(1.14);transform-origin:0 16.21px;">206.8</div>
<div class="t" style="left:765.00px;top:506.85px;width:1200px;text-align:left;font-size:19.2px;line-height:25px;font-weight:400;color:#252423;font-family:'Liberation Sans',sans-serif;font-style:normal;transform:scale(0.9386,1.0);transform-origin:0 19.15px;">BANA</div>
<div class="t" style="left:1030.50px;top:506.85px;width:1200px;text-align:left;font-size:19.2px;line-height:25px;font-weight:400;color:#252423;font-family:'Liberation Sans',sans-serif;font-style:normal;transform:scale(0.9553,1.0);transform-origin:0 19.15px;">bana</div>
<div class="t" style="left:72.50px;top:536.65px;width:1200px;text-align:left;font-size:19.2px;line-height:25px;font-weight:400;color:#252423;font-family:'Liberation Sans',sans-serif;font-style:normal;transform:scale(0.9946,1.0);transform-origin:0 19.15px;">Tea &amp; Coffee</div>
<div class="t" style="left:307.62px;top:540.09px;width:1200px;text-align:left;font-size:17.66px;line-height:23px;font-weight:400;color:#252423;font-family:'Liberation Mono',sans-serif;font-style:normal;transform:scaleY(1.14);transform-origin:0 16.21px;">48.4</div>
<div class="t" style="left:440.22px;top:540.09px;width:1200px;text-align:left;font-size:17.66px;line-height:23px;font-weight:400;color:#252423;font-family:'Liberation Mono',sans-serif;font-style:normal;transform:scaleY(1.14);transform-origin:0 16.21px;">74.0</div>
<div class="t" style="left:574.12px;top:540.09px;width:1200px;text-align:left;font-size:17.66px;line-height:23px;font-weight:400;color:#252423;font-family:'Liberation Mono',sans-serif;font-style:normal;transform:scaleY(1.14);transform-origin:0 16.21px;">90.5</div>
<div class="t" style="left:706.82px;top:540.09px;width:1200px;text-align:left;font-size:17.66px;line-height:23px;font-weight:400;color:#252423;font-family:'Liberation Mono',sans-serif;font-style:normal;transform:scaleY(1.14);transform-origin:0 16.21px;">53.0</div>
<div class="t" style="left:765.00px;top:536.65px;width:1200px;text-align:left;font-size:19.2px;line-height:25px;font-weight:400;color:#252423;font-family:'Liberation Sans',sans-serif;font-style:normal;transform:scale(0.8988,1.0);transform-origin:0 19.15px;">BofASE</div>
<div class="t" style="left:1015.10px;top:536.65px;width:1200px;text-align:left;font-size:19.2px;line-height:25px;font-weight:400;color:#252423;font-family:'Liberation Sans',sans-serif;font-style:normal;transform:scale(0.9774,1.0);transform-origin:0 19.15px;">bofase</div>
<svg class="b" style="left:39px;top:569.1px;" width="16" height="17" viewBox="39 569.1 16 17"><rect x="40.5" y="570.6" width="13" height="13" fill="none" stroke="#3b3a39" stroke-width="1.1"/><path d="M43.2,577.1 H50" stroke="#6b6b6b" stroke-width="1.4"/></svg>
<div class="t" style="left:64.50px;top:567.19px;width:1200px;text-align:left;font-size:18.2px;line-height:24px;font-weight:700;color:#252423;font-family:'Liberation Sans',sans-serif;font-style:normal;transform:scale(0.9906,1.0);transform-origin:0 18.31px;">Water</div>
<div class="t" style="left:297.02px;top:569.79px;width:1200px;text-align:left;font-size:17.66px;line-height:23px;font-weight:700;color:#252423;font-family:'Liberation Mono',sans-serif;font-style:normal;transform:scaleY(1.14);transform-origin:0 16.21px;">201.0</div>
<div class="t" style="left:429.62px;top:569.79px;width:1200px;text-align:left;font-size:17.66px;line-height:23px;font-weight:700;color:#252423;font-family:'Liberation Mono',sans-serif;font-style:normal;transform:scaleY(1.14);transform-origin:0 16.21px;">234.5</div>
<div class="t" style="left:563.52px;top:569.79px;width:1200px;text-align:left;font-size:17.66px;line-height:23px;font-weight:700;color:#252423;font-family:'Liberation Mono',sans-serif;font-style:normal;transform:scaleY(1.14);transform-origin:0 16.21px;">248.6</div>
<div class="t" style="left:696.22px;top:569.79px;width:1200px;text-align:left;font-size:17.66px;line-height:23px;font-weight:700;color:#252423;font-family:'Liberation Mono',sans-serif;font-style:normal;transform:scaleY(1.14);transform-origin:0 16.21px;">215.4</div>
<div class="t" style="left:765.00px;top:566.35px;width:1200px;text-align:left;font-size:19.2px;line-height:25px;font-weight:400;color:#252423;font-family:'Liberation Sans',sans-serif;font-style:normal;transform:scale(0.8884,1.0);transform-origin:0 19.15px;">MLPFS</div>
<div class="t" style="left:1023.00px;top:567.06px;width:1200px;text-align:left;font-size:18.6px;line-height:24px;font-weight:700;color:#252423;font-family:'Liberation Sans',sans-serif;font-style:normal;transform:scale(0.9746,1.0);transform-origin:0 18.44px;">mlpfs</div>
<div class="t" style="left:72.80px;top:596.75px;width:1200px;text-align:left;font-size:19.2px;line-height:25px;font-weight:400;color:#252423;font-family:'Liberation Sans',sans-serif;font-style:normal;transform:scale(1.0139,1.0);transform-origin:0 19.15px;">Mineral Water</div>
<div class="t" style="left:297.02px;top:600.19px;width:1200px;text-align:left;font-size:17.66px;line-height:23px;font-weight:400;color:#252423;font-family:'Liberation Mono',sans-serif;font-style:normal;transform:scaleY(1.14);transform-origin:0 16.21px;">166.1</div>
<div class="t" style="left:429.62px;top:600.19px;width:1200px;text-align:left;font-size:17.66px;line-height:23px;font-weight:400;color:#252423;font-family:'Liberation Mono',sans-serif;font-style:normal;transform:scaleY(1.14);transform-origin:0 16.21px;">204.1</div>
<div class="t" style="left:563.52px;top:600.19px;width:1200px;text-align:left;font-size:17.66px;line-height:23px;font-weight:400;color:#252423;font-family:'Liberation Mono',sans-serif;font-style:normal;transform:scaleY(1.14);transform-origin:0 16.21px;">220.7</div>
<div class="t" style="left:696.22px;top:600.19px;width:1200px;text-align:left;font-size:17.66px;line-height:23px;font-weight:400;color:#252423;font-family:'Liberation Mono',sans-serif;font-style:normal;transform:scaleY(1.14);transform-origin:0 16.21px;">179.6</div>
<div class="t" style="left:765.00px;top:596.75px;width:1200px;text-align:left;font-size:19.2px;line-height:25px;font-weight:400;color:#252423;font-family:'Liberation Sans',sans-serif;font-style:normal;transform:scale(0.9137,1.0);transform-origin:0 19.15px;">MLPCC</div>
<div class="t" style="left:1020.40px;top:596.75px;width:1200px;text-align:left;font-size:19.2px;line-height:25px;font-weight:400;color:#252423;font-family:'Liberation Sans',sans-serif;font-style:normal;transform:scale(1.0177,1.0);transform-origin:0 19.15px;">mlpcc</div>
<div class="t" style="left:72.80px;top:625.45px;width:1200px;text-align:left;font-size:19.2px;line-height:25px;font-weight:400;color:#252423;font-family:'Liberation Sans',sans-serif;font-style:normal;transform:scale(0.9946,1.0);transform-origin:0 19.15px;">Sparkling Water</div>
<div class="t" style="left:307.62px;top:628.89px;width:1200px;text-align:left;font-size:17.66px;line-height:23px;font-weight:400;color:#252423;font-family:'Liberation Mono',sans-serif;font-style:normal;transform:scaleY(1.14);transform-origin:0 16.21px;">34.9</div>
<div class="t" style="left:440.22px;top:628.89px;width:1200px;text-align:left;font-size:17.66px;line-height:23px;font-weight:400;color:#252423;font-family:'Liberation Mono',sans-serif;font-style:normal;transform:scaleY(1.14);transform-origin:0 16.21px;">30.3</div>
<div class="t" style="left:574.12px;top:628.89px;width:1200px;text-align:left;font-size:17.66px;line-height:23px;font-weight:400;color:#252423;font-family:'Liberation Mono',sans-serif;font-style:normal;transform:scaleY(1.14);transform-origin:0 16.21px;">27.9</div>
<div class="t" style="left:706.82px;top:628.89px;width:1200px;text-align:left;font-size:17.66px;line-height:23px;font-weight:400;color:#252423;font-family:'Liberation Mono',sans-serif;font-style:normal;transform:scaleY(1.14);transform-origin:0 16.21px;">35.8</div>
<div class="t" style="left:765.00px;top:625.45px;width:1200px;text-align:left;font-size:19.2px;line-height:25px;font-weight:400;color:#252423;font-family:'Liberation Sans',sans-serif;font-style:normal;transform:scale(0.9188,1.0);transform-origin:0 19.15px;">MLBTC</div>
<div class="t" style="left:1022.10px;top:625.45px;width:1200px;text-align:left;font-size:19.2px;line-height:25px;font-weight:400;color:#252423;font-family:'Liberation Sans',sans-serif;font-style:normal;transform:scale(1.0744,1.0);transform-origin:0 19.15px;">mlbtc</div>
<div class="b" style="left:947.8px;top:274px;width:143.20000000000005px;height:392px;border:2.5px solid #d9141e;border-radius:6px;box-sizing:border-box;box-shadow:inset 0 0 8px rgba(0,0,0,0.3),0 3px 7px rgba(0,0,0,0.12)"></div>
<div class="b" style="left:10.5px;top:1092.5px;width:22px;height:31px;background:#f3f3f3;box-shadow:0 1px 3px rgba(0,0,0,0.25)"></div>
<svg class="b" style="left:15px;top:1100px;" width="14" height="16" viewBox="15 1100 14 16"><g fill="#1b1a19"><rect x="17.2" y="1102.6" width="2.6" height="2.2"/><rect x="22.3" y="1102.6" width="2.6" height="2.2"/><rect x="17.2" y="1107.5" width="2.6" height="2.2"/><rect x="22.3" y="1107.5" width="2.6" height="2.2"/><rect x="17.2" y="1112.4" width="2.6" height="2.2"/><rect x="22.3" y="1112.4" width="2.6" height="2.2"/></g></svg>
<div class="b" style="left:4px;top:1142px;width:1456px;height:1.5px;background:#e6e6e6"></div>
<div class="b" style="left:0px;top:590px;width:3px;height:14px;background:#d0d0d0"></div>
<svg class="b" style="left:920px;top:1148px;" width="36" height="36" viewBox="920 1148 36 36"><polygon points="935.31,1155.74 935.95,1152.34 939.85,1152.34 940.49,1155.74 942.90,1156.74 945.75,1154.79 948.51,1157.55 946.56,1160.40 947.56,1162.81 950.96,1163.45 950.96,1167.35 947.56,1167.99 946.56,1170.40 948.51,1173.25 945.75,1176.01 942.90,1174.06 940.49,1175.06 939.85,1178.46 935.95,1178.46 935.31,1175.06 932.90,1174.06 930.05,1176.01 927.29,1173.25 929.24,1170.40 928.24,1167.99 924.84,1167.35 924.84,1163.45 928.24,1162.81 929.24,1160.40 927.29,1157.55 930.05,1154.79 932.90,1156.74" fill="none" stroke="#3b3a39" stroke-width="1.3" stroke-linejoin="round"/><circle cx="937.9" cy="1165.4" r="5.6" fill="none" stroke="#1f5fa8" stroke-width="1.6"/></svg>
<svg class="b" style="left:966px;top:1160px;" width="26" height="14" viewBox="966 1160 26 14"><path d="M970,1167 H987" stroke="#3b3a39" stroke-width="1.8"/></svg>
<div class="b" style="left:1000px;top:1152.5px;width:92px;height:32px;border:1.5px solid #c8c6c4;box-sizing:border-box;background:#fff"></div>
<div class="t" style="left:1022.00px;top:1160.56px;width:1200px;text-align:left;font-size:16.67px;line-height:22px;font-weight:400;color:#3b3a39;font-family:'Liberation Mono',sans-serif;font-style:normal;transform:scale(1.0000,1.3);transform-origin:0 15.44px;">100</div>
<div class="t" style="left:1056.00px;top:1156.85px;width:1200px;text-align:left;font-size:17.75px;line-height:23px;font-weight:400;color:#3b3a39;font-family:'Liberation Sans',sans-serif;font-style:normal;">%</div>
<svg class="b" style="left:1098px;top:1155px;" width="26" height="26" viewBox="1098 1155 26 26"><path d="M1102,1167.6 H1119 M1110.5,1159 V1176" stroke="#3b3a39" stroke-width="1.8"/></svg>
<div class="t" style="left:1166.40px;top:1152.15px;width:1200px;text-align:left;font-size:18.61px;line-height:24px;font-weight:400;color:#252423;font-family:'Liberation Sans',sans-serif;font-style:normal;">8 records</div>
<svg class="b" style="left:1260px;top:1150px;" width="200" height="34" viewBox="1260 1150 200 34"><path d="M1266,1156 V1178" stroke="#a19f9d" stroke-width="2"/>
<path d="M1281.5,1157 L1273,1167 L1281.5,1177" stroke="#a19f9d" stroke-width="2" fill="none"/>
<path d="M1301.5,1157 L1293,1167 L1301.5,1177" stroke="#a19f9d" stroke-width="2" fill="none"/>
<path d="M1420,1157 L1428.5,1167 L1420,1177" stroke="#a19f9d" stroke-width="2" fill="none"/>
<path d="M1439.5,1157 L1448,1167 L1439.5,1177" stroke="#a19f9d" stroke-width="2" fill="none"/>
<path d="M1456,1156 V1178" stroke="#a19f9d" stroke-width="2"/></svg>
<div class="t" style="left:1312.00px;top:1151.50px;width:1200px;text-align:left;font-size:19.04px;line-height:25px;font-weight:400;color:#252423;font-family:'Liberation Sans',sans-serif;font-style:normal;">Page 1 of 1</div>
<div class="b" style="left:1460px;top:7px;width:488.29999999999995px;height:1179px;background:#fff;box-shadow:-2px 0 4px rgba(0,0,0,0.14)"></div>
<div class="b" style="left:1460px;top:100px;width:488.29999999999995px;height:979.5999999999999px;background:#f3f3f3"></div>
<div class="b" style="left:1951px;top:588px;width:2px;height:18px;background:#8a8a8a"></div>
<svg class="b" style="left:1840px;top:5px;" width="112" height="28" viewBox="1840 5 112 28"><path d="M1843.5,8.5 H1867 L1858,18.5 V28 H1852.5 V18.5 Z" fill="none" stroke="#3b3a39" stroke-width="1.3" stroke-linejoin="round"/>
<path d="M1885.5,16 V27.3 H1906 V16 M1885.5,20.5 H1894 V27.3" fill="none" stroke="#3b3a39" stroke-width="1.3"/>
<path d="M1896,10.8 H1905.8 V20.5 M1905.8,10.8 L1896,20.5" fill="none" stroke="#3b3a39" stroke-width="1.3"/>
<circle cx="1927.8" cy="17.2" r="1.4" fill="#3b3a39"/><circle cx="1937.2" cy="17.2" r="1.4" fill="#3b3a39"/><circle cx="1946.6" cy="17.2" r="1.4" fill="#3b3a39"/></svg>
<svg class="b" style="left:1486px;top:48px;" width="22" height="30" viewBox="1486 48 22 30"><path d="M1502,52.5 L1491.5,62 L1502,71.5" fill="none" stroke="#3b3a39" stroke-width="1.5"/></svg>
<div class="t" style="left:1538.50px;top:39.99px;width:1200px;text-align:left;font-size:31.49px;line-height:41px;font-weight:400;color:#252423;font-family:'Liberation Sans',sans-serif;font-style:normal;transform:scale(1.0000,1.04);transform-origin:0 31.41px;">Formula Measure</div>
<svg class="b" style="left:1792px;top:47px;" width="26" height="26" viewBox="1792 47 26 26"><circle cx="1804.3" cy="59.6" r="8.6" fill="none" stroke="#252423" stroke-width="1.3"/><rect x="1803.5" y="57.2" width="1.7" height="6.7" fill="#252423"/><circle cx="1804.35" cy="54.9" r="1.05" fill="#252423"/></svg>
<svg class="b" style="left:1908px;top:53px;" width="28" height="28" viewBox="1908 53 28 28"><path d="M1912.3,57.3 L1931.5,76.5 M1931.5,57.3 L1912.3,76.5" fill="none" stroke="#252423" stroke-width="1.9"/></svg>
<div class="t" style="left:1486.80px;top:130.11px;width:1200px;text-align:left;font-size:19.02px;line-height:25px;font-weight:700;color:#323130;font-family:'Liberation Sans',sans-serif;font-style:normal;">Title</div>
<div class="t" style="left:1532.00px;top:127.83px;width:1200px;text-align:left;font-size:21.28px;line-height:28px;font-weight:700;color:#a4262c;font-family:'Liberation Sans',sans-serif;font-style:normal;">*</div>
<div class="b" style="left:1487px;top:160.3px;width:435px;height:52.69999999999999px;background:#fff;border:1px solid #dedede;box-sizing:border-box"></div>
<div class="t" style="left:1508.80px;top:174.49px;width:1200px;text-align:left;font-size:19.37px;line-height:25px;font-weight:400;color:#323130;font-family:'Liberation Sans',sans-serif;font-style:normal;">New Column</div>
<div class="t" style="left:1487.00px;top:243.93px;width:1200px;text-align:left;font-size:17.52px;line-height:23px;font-weight:700;color:#323130;font-family:'Liberation Sans',sans-serif;font-style:normal;">Insert as</div>
<div class="t" style="left:1565.20px;top:240.71px;width:1200px;text-align:left;font-size:21.03px;line-height:27px;font-weight:700;color:#a4262c;font-family:'Liberation Sans',sans-serif;font-style:normal;">*</div>
<div class="b" style="left:1486.5px;top:279.2px;width:162.79999999999995px;height:138.8px;background:#fff"></div>
<div class="b" style="left:1662.7px;top:279.2px;width:158.5px;height:138.8px;background:#fff;border:1.5px solid #2b7bc9;box-sizing:border-box"></div>
<svg class="b" style="left:1500px;top:338px;" width="28" height="28" viewBox="1500 338 28 28"><circle cx="1513" cy="350.7" r="9.5" fill="#fff" stroke="#605e5c" stroke-width="1.3"/></svg>
<svg class="b" style="left:1676px;top:337px;" width="28" height="28" viewBox="1676 337 28 28"><circle cx="1689" cy="350.7" r="10.2" fill="#fff" stroke="#605e5c" stroke-width="1.5"/><circle cx="1689" cy="350.7" r="5.8" fill="#6b6b6b"/></svg>
<div class="t" style="left:1544.00px;top:347.93px;width:1200px;text-align:left;font-size:18.38px;line-height:24px;font-weight:400;color:#323130;font-family:'Liberation Sans',sans-serif;font-style:normal;">Visual</div>
<div class="t" style="left:1532.70px;top:376.94px;width:1200px;text-align:left;font-size:18.64px;line-height:24px;font-weight:400;color:#323130;font-family:'Liberation Sans',sans-serif;font-style:normal;">Measure</div>
<div class="t" style="left:1718.00px;top:347.91px;width:1200px;text-align:left;font-size:18.45px;line-height:24px;font-weight:400;color:#323130;font-family:'Liberation Sans',sans-serif;font-style:normal;">Visual</div>
<div class="t" style="left:1710.00px;top:376.24px;width:1200px;text-align:left;font-size:19.22px;line-height:25px;font-weight:400;color:#323130;font-family:'Liberation Sans',sans-serif;font-style:normal;">Column</div>
<svg class="b" style="left:1535px;top:294px;" width="70" height="48" viewBox="1535 294 70 48">
<path d="M1555.5,309 V298.8 H1596 V309 M1574.8,298.8 V309" fill="none" stroke="#1f5fa8" stroke-width="1.5"/>
<path d="M1552,305 L1555.5,309.3 L1559,305 M1571.3,305 L1574.8,309.3 L1578.3,305 M1592.5,305 L1596,309.3 L1599.5,305" fill="none" stroke="#1f5fa8" stroke-width="1.5"/>
<rect x="1553" y="319" width="6.6" height="19.2" fill="#6aaae8"/>
<rect x="1573" y="319" width="7" height="19.2" fill="#6aaae8"/>
<rect x="1592.5" y="319" width="7" height="19.2" fill="#6aaae8"/>
<rect x="1538.5" y="312.6" width="61" height="25.6" fill="none" stroke="#3b3a39" stroke-width="1.3"/>
<path d="M1538.5,319 H1599.5 M1559.4,312.6 V319 M1580.3,312.6 V319 M1545.8,319 V338.2 M1566.3,319 V338.2 M1585.3,319 V338.2" stroke="#3b3a39" stroke-width="1.3" fill="none"/>
<path d="M1552.8,319 V338.2 M1559.5,319 V338.2 M1573,319 V338.2 M1580.2,319 V338.2 M1592.4,319 V338.2" stroke="#1f5fa8" stroke-width="1.3" fill="none"/>
<path d="M1599.5,319 V338.2" stroke="#1f5fa8" stroke-width="1.5" fill="none"/></svg>
<svg class="b" style="left:1710px;top:296px;" width="66" height="46" viewBox="1710 296 66 46">
<rect x="1764.3" y="313" width="8" height="25.2" fill="#6aaae8" stroke="#1f5fa8" stroke-width="1.4"/>
<path d="M1764.3,313 H1714.6 V338.2 H1764.3 M1714.6,320 H1764.3 M1731,313 V338.2 M1747.7,313 V338.2 M1722.8,320 V338.2 M1739.3,320 V338.2 M1756,320 V338.2" fill="none" stroke="#3b3a39" stroke-width="1.3"/>
<path d="M1768.5,300.4 V310 M1765.2,306.4 L1768.5,310 L1771.8,306.4" fill="none" stroke="#1f5fa8" stroke-width="1.5"/></svg>
<div class="t" style="left:1487.00px;top:448.89px;width:1200px;text-align:left;font-size:17.93px;line-height:23px;font-weight:700;color:#323130;font-family:'Liberation Sans',sans-serif;font-style:normal;">Formula</div>
<div class="t" style="left:1565.00px;top:445.90px;width:1200px;text-align:left;font-size:20.77px;line-height:27px;font-weight:700;color:#a4262c;font-family:'Liberation Sans',sans-serif;font-style:normal;">*</div>
<div class="b" style="left:1487.3px;top:484.8px;width:434.4000000000001px;height:167.2px;background:#fff;border:1px solid #e3e3e3;box-sizing:border-box"></div>
<div class="t" style="left:1494.70px;top:496.30px;width:1200px;text-align:left;font-size:19.06px;line-height:25px;font-weight:400;color:#252423;font-family:'Liberation Sans',sans-serif;font-style:normal;"><span style="color:#2b79c2">LOWER</span><span style="color:#484644">(</span><span style="color:#2b79c2">[Quarter Item &gt; ENTITY]</span><span style="color:#484644"> )</span></div>
<div class="b" style="left:1491.5px;top:485px;width:305.70000000000005px;height:46.60000000000002px;border:2.2px solid #d9141e;border-radius:6px;box-sizing:border-box;box-shadow:inset 0 0 7px rgba(0,0,0,0.28),0 2px 5px rgba(0,0,0,0.12)"></div>
<svg class="b" style="left:1486px;top:656px;" width="20" height="22" viewBox="1486 656 20 22"><path d="M1492.5,670.5 Q1490.3,667.8 1489.5,665.5 Q1488.3,660 1494,658.3 Q1499,657.3 1501.5,661 Q1503,664 1501.5,667 Q1500.5,669 1499,670.5 V675.5 H1492.5 Z" fill="none" stroke="#605e5c" stroke-width="1.2"/><path d="M1492.5,672.8 H1499" stroke="#605e5c" stroke-width="1"/></svg>
<div class="t" style="left:1514.10px;top:654.86px;width:1200px;text-align:left;font-size:18px;line-height:23px;font-weight:700;color:#605e5c;font-family:'Liberation Sans',sans-serif;font-style:normal;transform:scale(0.9097,1.0);transform-origin:0 17.74px;">Example</div>
<div class="t" style="left:1584.80px;top:654.86px;width:1200px;text-align:left;font-size:18px;line-height:23px;font-weight:400;color:#605e5c;font-family:'Liberation Sans',sans-serif;font-style:normal;transform:scale(0.6944,1.0);transform-origin:0 17.74px;">:</div>
<div class="t" style="left:1597.86px;top:654.87px;width:1200px;text-align:left;font-size:17.99px;line-height:23px;font-weight:400;color:#605e5c;font-family:'Liberation Sans',sans-serif;font-style:italic;">[Plan] + [Q1 &gt; Plan]</div>
<div class="t" style="left:1645.90px;top:681.91px;width:1200px;text-align:left;font-size:17.59px;line-height:23px;font-weight:400;color:#605e5c;font-family:'Liberation Sans',sans-serif;font-style:normal;">to open suggestion, also select any</div>
<div class="t" style="left:1514.10px;top:681.91px;width:1200px;text-align:left;font-size:17.59px;line-height:23px;font-weight:400;color:#605e5c;font-family:'Liberation Sans',sans-serif;font-style:normal;transform:scale(0.8849,1.0);transform-origin:0 17.59px;">Use</div>
<div class="t" style="left:1547.30px;top:683.39px;width:1200px;text-align:left;font-size:16.18px;line-height:21px;font-weight:700;color:#605e5c;font-family:'Liberation Sans',sans-serif;font-style:normal;">Ctrl + Space</div>
<div class="t" style="left:1514.10px;top:708.93px;width:1200px;text-align:left;font-size:18.1px;line-height:24px;font-weight:400;color:#605e5c;font-family:'Liberation Sans',sans-serif;font-style:normal;">column or cell to insert the reference</div>
<div class="t" style="left:1487.00px;top:764.92px;width:1200px;text-align:left;font-size:18.12px;line-height:24px;font-weight:700;color:#323130;font-family:'Liberation Sans',sans-serif;font-style:normal;">Row aggregation type</div>
<div class="t" style="left:1682.60px;top:763.95px;width:1200px;text-align:left;font-size:19.49px;line-height:25px;font-weight:700;color:#a4262c;font-family:'Liberation Sans',sans-serif;font-style:normal;">*</div>
<div class="b" style="left:1487px;top:801.3px;width:435px;height:52.30000000000007px;background:#fff;border:1px solid #e3e3e3;box-sizing:border-box"></div>
<div class="t" style="left:1505.10px;top:816.75px;width:1200px;text-align:left;font-size:19.18px;line-height:25px;font-weight:400;color:#323130;font-family:'Liberation Sans',sans-serif;font-style:normal;">Formula (Sum)</div>
<svg class="b" style="left:1880px;top:818px;" width="30" height="20" viewBox="1880 818 30 20"><path d="M1884.2,822.3 L1894.2,832.6 L1904.3,822.3" fill="none" stroke="#3b3a39" stroke-width="1.5"/></svg>
<div class="t" style="left:1487.00px;top:884.76px;width:1200px;text-align:left;font-size:18.0px;line-height:23px;font-weight:700;color:#323130;font-family:'Liberation Sans',sans-serif;font-style:normal;">Description</div>
<div class="b" style="left:1487px;top:921.3px;width:435px;height:58.700000000000045px;background:#fff;border:1px solid #e3e3e3;box-sizing:border-box"></div>
<div class="t" style="left:1496.90px;top:928.46px;width:1200px;text-align:left;font-size:21.47px;line-height:28px;font-weight:400;color:#a19f9d;font-family:'Liberation Sans',sans-serif;font-style:normal;">Briefly describe the formula</div>
<svg class="b" style="left:1906px;top:964px;" width="14" height="14" viewBox="1906 964 14 14"><path d="M1907.5,977 L1918.5,966 M1912.5,977 L1918.5,971" stroke="#3b3a39" stroke-width="1.2"/></svg>
<div class="b" style="left:1646px;top:1103.7px;width:133px;height:59.299999999999955px;background:#f3f3f3"></div>
<div class="t" style="left:1681.10px;top:1122.48px;width:1200px;text-align:left;font-size:19.39px;line-height:25px;font-weight:700;color:#323130;font-family:'Liberation Sans',sans-serif;font-style:normal;">Cancel</div>
<div class="b" style="left:1792px;top:1103.7px;width:133.20000000000005px;height:59.299999999999955px;background:#0b74d0"></div>
<div class="t" style="left:1824.80px;top:1121.71px;width:1200px;text-align:left;font-size:20.18px;line-height:26px;font-weight:700;color:#fff;font-family:'Liberation Sans',sans-serif;font-style:normal;">Update</div>
</body></html>
